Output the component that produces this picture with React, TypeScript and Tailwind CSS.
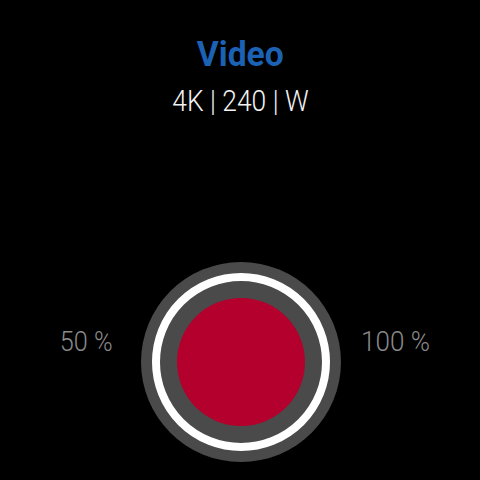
export default function App() {
  return (
    <div
      className="w-[480px] h-[480px] bg-black flex flex-col items-center overflow-hidden"
      style={{ fontFamily: 'Roboto, "Liberation Sans", sans-serif' }}
    >
      {/* Title */}
      <h1 className="mt-[37px] text-[35px] leading-[35px] font-bold text-[#1b62b4] scale-x-[0.96]">Video</h1>
      <p className="mt-[14px] text-[30px] leading-[30px] font-light text-[#f2f2f2] scale-x-[0.88] whitespace-nowrap">
        4K | 240 | W
      </p>

      {/* Shutter row */}
      <div className="mt-[146px] flex w-full">
        <div className="w-[141px] flex justify-end pr-[28px] pt-[66px]">
          <span className="inline-block origin-right scale-x-[0.9] text-[28px] leading-[28px] font-light text-[#8a8a8a] whitespace-nowrap">
            50 %
          </span>
        </div>
        <div className="w-[200px] h-[200px] rounded-full bg-[#4a4a4a] flex items-center justify-center">
          <div className="w-[178px] h-[178px] rounded-full border-[8px] border-white bg-[#4a4a4a] flex items-center justify-center">
            <div className="w-[128px] h-[128px] rounded-full bg-[#b3002d]" />
          </div>
        </div>
        <div className="pl-[20px] pt-[66px]">
          <span className="inline-block origin-left scale-x-[0.93] text-[28px] leading-[28px] font-light text-[#8a8a8a] whitespace-nowrap">
            100 %
          </span>
        </div>
      </div>
    </div>
  );
}
